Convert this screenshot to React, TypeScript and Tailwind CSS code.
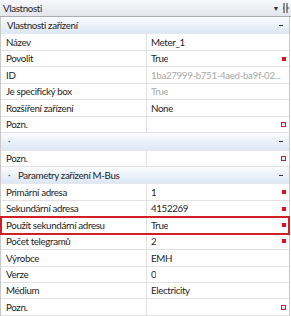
import React from 'react';

type Row =
  | { kind: 'group'; label: string; dot?: boolean }
  | { kind: 'prop'; label: string; value?: string; muted?: boolean; mark?: 'fill' | 'hollow'; highlight?: boolean };

const ROWS: Row[] = [
  { kind: 'group', label: 'Vlastnosti zařízení' },
  { kind: 'prop', label: 'Název', value: 'Meter_1' },
  { kind: 'prop', label: 'Povolit', value: 'True', mark: 'fill' },
  { kind: 'prop', label: 'ID', value: '1ba27999-b751-4aed-ba9f-02...', muted: true },
  { kind: 'prop', label: 'Je specifický box', value: 'True', muted: true },
  { kind: 'prop', label: 'Rozšíření zařízení', value: 'None' },
  { kind: 'prop', label: 'Pozn.', mark: 'hollow' },
  { kind: 'group', label: '', dot: true },
  { kind: 'prop', label: 'Pozn.', mark: 'hollow' },
  { kind: 'group', label: 'Parametry zařízení M-Bus', dot: true },
  { kind: 'prop', label: 'Primární adresa', value: '1', mark: 'fill' },
  { kind: 'prop', label: 'Sekundární adresa', value: '4152269', mark: 'fill' },
  { kind: 'prop', label: 'Použít sekundární adresu', value: 'True', mark: 'fill', highlight: true },
  { kind: 'prop', label: 'Počet telegramů', value: '2', mark: 'fill' },
  { kind: 'prop', label: 'Výrobce', value: 'EMH' },
  { kind: 'prop', label: 'Verze', value: '0' },
  { kind: 'prop', label: 'Médium', value: 'Electricity' },
  { kind: 'prop', label: 'Pozn.', mark: 'hollow' },
];

function Marker({ mark }: { mark?: 'fill' | 'hollow' }) {
  if (mark === 'fill') return <span className="w-[4px] h-[4px] bg-[#e0101a] shrink-0" />;
  if (mark === 'hollow')
    return <span className="w-[5px] h-[5px] border border-[#b8282e] bg-[#f6e8e8] shrink-0" />;
  return null;
}

function GroupRow({ row }: { row: Extract<Row, { kind: 'group' }> }) {
  return (
    <div className="flex-1 basis-0 min-h-0 flex items-center bg-gradient-to-b from-[#fbfcfe] to-[#dce7f5] border-b border-[#e4e8ee] pr-[5px]">
      {row.dot ? (
        <>
          <span className="w-[15px] pl-[7px] text-[#555] leading-none">·</span>
          <span className="pl-[2px]">{row.label}</span>
        </>
      ) : (
        <span className="pl-[6px]">{row.label}</span>
      )}
      <span className="ml-auto w-[4px] h-[1px] bg-[#333] mr-[1px]" />
    </div>
  );
}

function PropRow({ row }: { row: Extract<Row, { kind: 'prop' }> }) {
  return (
    <div
      className={
        'flex-1 basis-0 min-h-0 flex relative ' +
        (row.highlight ? 'outline-2 outline-[#d21f27] -outline-offset-1 z-10' : '')
      }
    >
      <div className="w-[146px] shrink-0 flex items-center pl-[5px] border-r border-b border-[#e2e2e2] whitespace-nowrap overflow-hidden">
        {row.label}
      </div>
      <div className="flex-1 min-w-0 flex items-center pl-[4px] pr-[3px] border-b border-[#e2e2e2] whitespace-nowrap">
        <span className={'truncate ' + (row.muted ? 'text-[#a8a8a8]' : '')}>{row.value}</span>
        <span className="ml-auto flex items-center pl-[2px]">
          <Marker mark={row.mark} />
        </span>
      </div>
    </div>
  );
}

export default function App() {
  return (
    <div
      className="w-[291px] h-[316px] flex flex-col bg-white text-[#1e1e1e] text-[9.75px] tracking-[-0.35px] overflow-hidden"
      style={{ fontFamily: 'Lato, "Noto Sans", sans-serif' }}
    >
      <div className="h-[17px] shrink-0 flex items-center bg-gradient-to-b from-[#f8f9fb] to-[#e2e5ea] border-b border-[#a9aeb5] pl-[3px] pr-[2px]">
        <span>Vlastnosti</span>
        <span className="ml-auto text-[7px] text-[#333] mr-[4px]">▼</span>
        <svg width="6" height="10" viewBox="0 0 6 10" className="shrink-0">
          <path d="M1 0v10M4 0v10M0 5h1M4 5h2" stroke="#333" strokeWidth="1" fill="none" />
        </svg>
      </div>
      <div className="flex-1 flex flex-col border-l border-r border-[#c9c9c9] mr-[1px]">
        {ROWS.map((r, i) =>
          r.kind === 'group' ? <GroupRow key={i} row={r} /> : <PropRow key={i} row={r} />
        )}
      </div>
    </div>
  );
}
